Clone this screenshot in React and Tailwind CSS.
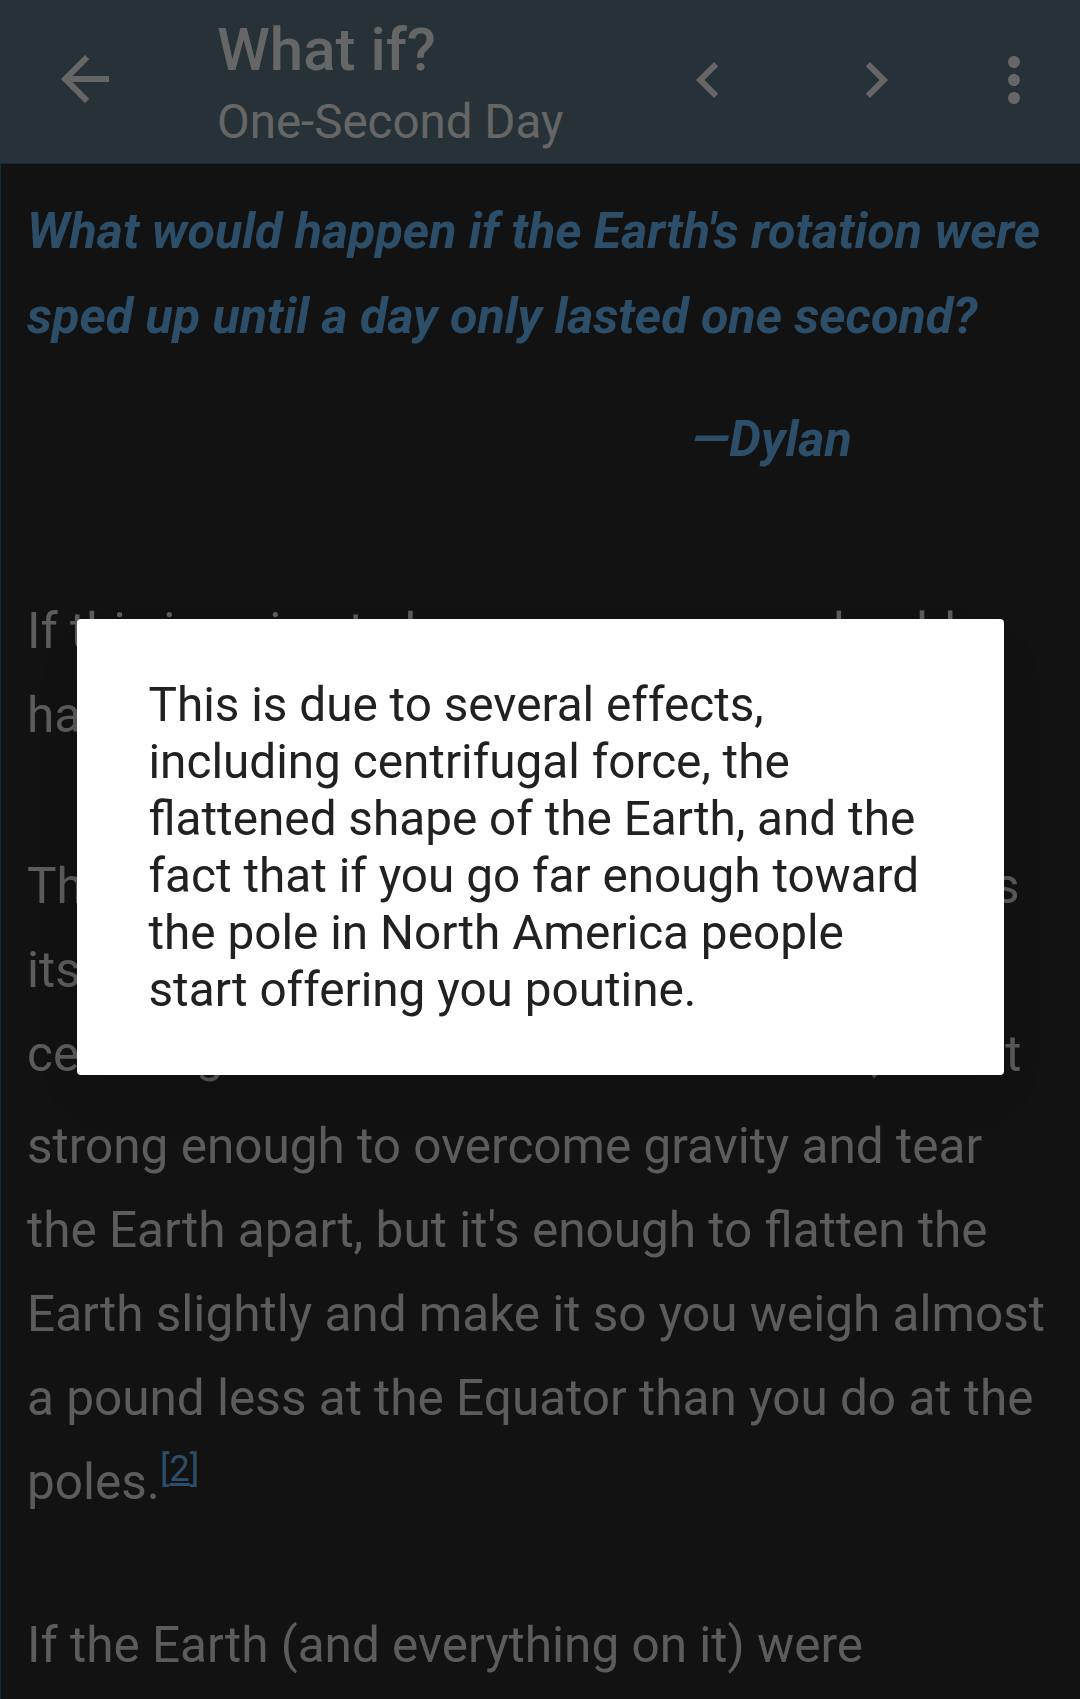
const ICONS = {
  back: 'M20 11H7.83l5.59-5.59L12 4l-8 8 8 8 1.41-1.41L7.83 13H20v-2z',
  prev: 'M15.41 7.41L14 6l-6 6 6 6 1.41-1.41L10.83 12z',
  next: 'M10 6L8.59 7.41 13.17 12l-4.58 4.59L10 18l6-6z',
  more: 'M12 8c1.1 0 2-.9 2-2s-.9-2-2-2-2 .9-2 2 .9 2 2 2zm0 2c-1.1 0-2 .9-2 2s.9 2 2 2 2-.9 2-2-.9-2-2-2zm0 6c-1.1 0-2 .9-2 2s.9 2 2 2 2-.9 2-2-.9-2-2-2z',
}

function Icon({ name }) {
  return (
    <svg viewBox="0 0 24 24" className="h-[72px] w-[72px]" fill="currentColor">
      <path d={ICONS[name]} />
    </svg>
  )
}

function Note({ n }) {
  return <sup className="text-[36px] text-[#589cd2] underline">[{n}]</sup>
}

export default function App() {
  return (
    <div className="min-h-screen bg-[#242424] font-['Roboto',sans-serif]">

      {/* Toolbar */}
      <header className="flex h-[164px] items-start border-b border-[#1e5476] bg-[#4c6470] text-[#cccccc]">
        <button className="ml-[49px] mt-[43px]">
          <Icon name="back" />
        </button>
        <div className="ml-[96px] mt-[20px] flex-1">
          <h1 className="text-[60px] font-medium leading-[60px]">What if?</h1>
          <p className="mt-[18px] text-[47.5px] leading-[48px]">One-Second Day</p>
        </div>
        <div className="mr-[30px] mt-[43px] flex">
          <button className="mt-px"><Icon name="prev" /></button>
          <button className="ml-[96px] mt-px"><Icon name="next" /></button>
          <button className="ml-[66px]"><Icon name="more" /></button>
        </div>
      </header>

      {/* Article */}
      <main className="border-l border-[#1e5476] pl-[26px] pr-[27px] pt-[24px] text-[49.5px] leading-[84px] text-[#b8b8b8]">
        <p className="text-[50.2px] font-bold italic leading-[85px] text-[#589cd2]">
          What would happen if the Earth's rotation were sped up until a day only lasted one second?
        </p>
        <p className="mt-[38px] pl-[665px] text-[50.2px] font-bold italic leading-[85px] text-[#589cd2]">—Dylan</p>

        <p className="mt-[108px]">
          If this is going to happen, someone should have a word with Dylan.
        </p>

        <p className="mt-[87px]">
          The Earth is already spinning, and this means its surface is being flung outward by
          centrifugal force.
          <span className="inline-block h-[92px] align-top text-[36px] leading-[60px] text-[#589cd2] underline">[1]</span>{' '}
          That effect is weak; it isn't strong enough to overcome gravity and tear the Earth apart,
          but it's enough to flatten the Earth slightly and make it so you weigh almost a pound less
          at the Equator than you do at the poles.<Note n={2} />
        </p>

        <p className="mt-[79px]">
          If the Earth (and everything on it) were spinning once every second, the ground would fly
          apart.
        </p>
      </main>

      {/* Footnote dialog */}
      <div className="fixed inset-0 flex items-center justify-center bg-black/50 pb-[5px]">
        <div className="w-[927px] rounded-[4px] bg-white px-[72px] pb-[56px] pt-[58px] text-[47.7px] leading-[57px] text-[#212121] shadow-2xl">
          This is due to several effects, including centrifugal force, the flattened shape of the
          Earth, and the fact that if you go far enough toward the pole in North America people start
          offering you poutine.
        </div>
      </div>
    </div>
  )
}
